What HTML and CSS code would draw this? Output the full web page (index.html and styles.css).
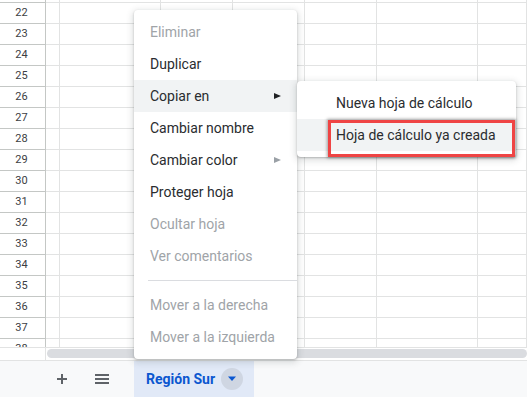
FILE: index.html
```html
<!DOCTYPE html>
<html lang="es">
<head>
    <meta charset="UTF-8">
    <title>Hoja - Región Sur</title>
    <link rel="stylesheet" href="styles.css">
</head>
<body>
    <div class="sheet">
        <div class="grid">
            <div class="row"><div class="num"></div><div class="c"></div><div class="c"></div><div class="c"></div><div class="c"></div><div class="c"></div><div class="c"></div><div class="c"></div></div>
            <div class="row"><div class="num">22</div><div class="c"></div><div class="c"></div><div class="c"></div><div class="c"></div><div class="c"></div><div class="c"></div><div class="c"></div></div>
            <div class="row"><div class="num">23</div><div class="c"></div><div class="c"></div><div class="c"></div><div class="c"></div><div class="c"></div><div class="c"></div><div class="c"></div></div>
            <div class="row"><div class="num">24</div><div class="c"></div><div class="c"></div><div class="c"></div><div class="c"></div><div class="c"></div><div class="c"></div><div class="c"></div></div>
            <div class="row"><div class="num">25</div><div class="c"></div><div class="c"></div><div class="c"></div><div class="c"></div><div class="c"></div><div class="c"></div><div class="c"></div></div>
            <div class="row"><div class="num">26</div><div class="c"></div><div class="c"></div><div class="c"></div><div class="c"></div><div class="c"></div><div class="c"></div><div class="c"></div></div>
            <div class="row"><div class="num">27</div><div class="c"></div><div class="c"></div><div class="c"></div><div class="c"></div><div class="c"></div><div class="c"></div><div class="c"></div></div>
            <div class="row"><div class="num">28</div><div class="c"></div><div class="c"></div><div class="c"></div><div class="c"></div><div class="c"></div><div class="c"></div><div class="c"></div></div>
            <div class="row"><div class="num">29</div><div class="c"></div><div class="c"></div><div class="c"></div><div class="c"></div><div class="c"></div><div class="c"></div><div class="c"></div></div>
            <div class="row"><div class="num">30</div><div class="c"></div><div class="c"></div><div class="c"></div><div class="c"></div><div class="c"></div><div class="c"></div><div class="c"></div></div>
            <div class="row"><div class="num">31</div><div class="c"></div><div class="c"></div><div class="c"></div><div class="c"></div><div class="c"></div><div class="c"></div><div class="c"></div></div>
            <div class="row"><div class="num">32</div><div class="c"></div><div class="c"></div><div class="c"></div><div class="c"></div><div class="c"></div><div class="c"></div><div class="c"></div></div>
            <div class="row"><div class="num">33</div><div class="c"></div><div class="c"></div><div class="c"></div><div class="c"></div><div class="c"></div><div class="c"></div><div class="c"></div></div>
            <div class="row"><div class="num">34</div><div class="c"></div><div class="c"></div><div class="c"></div><div class="c"></div><div class="c"></div><div class="c"></div><div class="c"></div></div>
            <div class="row"><div class="num">35</div><div class="c"></div><div class="c"></div><div class="c"></div><div class="c"></div><div class="c"></div><div class="c"></div><div class="c"></div></div>
            <div class="row"><div class="num">36</div><div class="c"></div><div class="c"></div><div class="c"></div><div class="c"></div><div class="c"></div><div class="c"></div><div class="c"></div></div>
            <div class="row"><div class="num">37</div><div class="c"></div><div class="c"></div><div class="c"></div><div class="c"></div><div class="c"></div><div class="c"></div><div class="c"></div></div>
            <div class="row"><div class="num">38</div><div class="c"></div><div class="c"></div><div class="c"></div><div class="c"></div><div class="c"></div><div class="c"></div><div class="c"></div></div>
        </div>
    </div>

    <div class="scroll-row">
        <div class="scroll-corner"></div>
        <div class="scroll-track"><div class="thumb"></div></div>
    </div>

    <div class="tabbar">
        <button class="icon-btn" title="Añadir hoja">
            <svg width="12" height="12" viewBox="0 0 12 12"><path d="M6 1v10M1 6h10" stroke="#5f6368" stroke-width="2"/></svg>
        </button>
        <button class="icon-btn" title="Todas las hojas">
            <svg width="14" height="10" viewBox="0 0 14 10"><path d="M0 1h14M0 5h14M0 9h14" stroke="#5f6368" stroke-width="2"/></svg>
        </button>
        <div class="tab">
            <span>Región Sur</span>
            <span class="tab-drop">
                <svg width="10" height="6" viewBox="0 0 10 6"><path d="M1 0.5h8L5 5z" fill="#0b57d0"/></svg>
            </span>
        </div>
    </div>

    <!-- menu contextual de la pestaña -->
    <div class="menu">
        <div class="item off">Eliminar</div>
        <div class="item">Duplicar</div>
        <div class="item active">Copiar en <span class="arrow"></span></div>
        <div class="item">Cambiar nombre</div>
        <div class="item">Cambiar color <span class="arrow grey"></span></div>
        <div class="item">Proteger hoja</div>
        <div class="item off">Ocultar hoja</div>
        <div class="item off">Ver comentarios</div>
        <div class="sep"></div>
        <div class="item off">Mover a la derecha</div>
        <div class="item off">Mover a la izquierda</div>
    </div>

    <div class="submenu">
        <div class="item">Nueva hoja de cálculo</div>
        <div class="item active">Hoja de cálculo ya creada</div>
    </div>
    <div class="mark"></div>
</body>
</html>
```

FILE: styles.css
```css
body {
    margin: 0;
    width: 527px;
    height: 397px;
    overflow: hidden;
    font-family: Roboto, "Liberation Sans", Arial, sans-serif;
    background: #fff;
    position: relative;
}

.sheet {
    height: 347px;
    overflow: hidden;
}

.grid {
    margin-top: -18px;
}

.row {
    display: grid;
    grid-template-columns: 46px 14px 101px 72px 72px 72px 101px 1fr;
    height: 21px;
}

.row > div {
    box-sizing: border-box;
    border-right: 1px solid #e2e3e3;
    border-bottom: 1px solid #e2e3e3;
}

.row .num {
    border-right-color: #c4c7c5;
    border-bottom-color: #c4c7c5;
    font-size: 11px;
    color: #3c4043;
    text-align: center;
    line-height: 20px;
    padding-right: 2px;
}

.scroll-row {
    display: flex;
    height: 14px;
    border-top: 1px solid #e2e3e3;
    border-bottom: 1px solid #e2e3e3;
    box-sizing: border-box;
}

.scroll-corner {
    width: 46px;
    box-sizing: border-box;
    border-right: 1px solid #e2e3e3;
}

.scroll-track {
    flex: 1;
    padding: 1px 0 0 1px;
}

.thumb {
    height: 9px;
    background: #dadce0;
    border-radius: 5px;
}

.tabbar {
    height: 36px;
    background: #f8f9fa;
    display: flex;
    align-items: center;
    padding-left: 42px;
}

.icon-btn {
    width: 40px;
    height: 36px;
    border: none;
    background: none;
    padding: 0;
    display: flex;
    align-items: center;
    justify-content: center;
}

.tab {
    margin-left: 12px;
    width: 120px;
    height: 36px;
    box-sizing: border-box;
    background: #e1e9f7;
    display: flex;
    align-items: center;
    padding-left: 12px;
    font-size: 14px;
    font-weight: 700;
    color: #0b57d0;
}

.tab-drop {
    margin-left: 6px;
    width: 22px;
    height: 22px;
    border-radius: 50%;
    background: #cfd6e2;
    display: flex;
    align-items: center;
    justify-content: center;
}

.menu, .submenu {
    position: absolute;
    background: #fff;
    border-radius: 4px;
    box-shadow: 0 1px 2px rgba(60, 64, 67, 0.3), 0 2px 6px 2px rgba(60, 64, 67, 0.15);
    padding: 6px 0;
}

.menu {
    left: 134px;
    top: 10px;
    width: 163px;
}

.submenu {
    left: 297px;
    top: 81px;
    width: 219px;
}

.item {
    height: 32px;
    line-height: 32px;
    padding-left: 16px;
    font-size: 14px;
    color: #2a2c2f;
    white-space: nowrap;
    display: flex;
    align-items: center;
}

.submenu .item {
    padding-left: 39px;
}

.item.off {
    color: #a0a4a8;
}

.item.active {
    background: #f1f3f4;
}

.arrow {
    margin-left: auto;
    margin-right: 16px;
    width: 0;
    height: 0;
    border-top: 3px solid transparent;
    border-bottom: 3px solid transparent;
    border-left: 7px solid #202124;
}

.arrow.grey {
    border-left-color: #9aa0a6;
}

.sep {
    margin: 8px 0 8px 14px;
    border-top: 1px solid #dadce0;
}

.mark {
    position: absolute;
    left: 328px;
    top: 120px;
    width: 187px;
    height: 37px;
    box-sizing: border-box;
    border: 3px solid #ef4444;
    box-shadow: 0 0 3px 1px rgba(0, 0, 0, 0.35);
}
```
